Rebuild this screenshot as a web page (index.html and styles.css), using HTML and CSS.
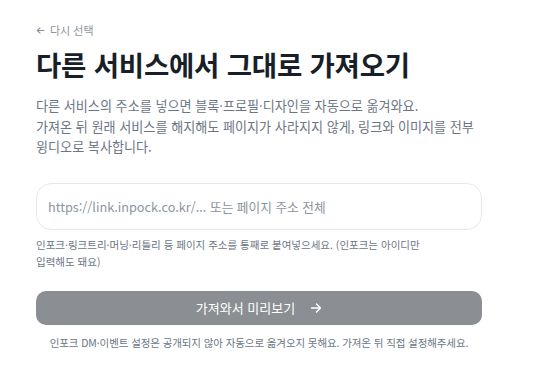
FILE: index.html
```html
<!DOCTYPE html>
<html lang="ko">
<head>
    <meta charset="UTF-8">
    <meta name="viewport" content="width=device-width, initial-scale=1.0">
    <title>다른 서비스에서 가져오기</title>
    <link rel="stylesheet" href="styles.css">
</head>
<body>
    <div class="page">
        <a class="back" href="#">
            <svg class="back-icon" width="9" height="9" viewBox="0 0 10 10" fill="none">
                <path d="M9 5H1.5M4.5 2L1.5 5L4.5 8" stroke="currentColor" stroke-width="1.2" stroke-linecap="round" stroke-linejoin="round"/>
            </svg>
            다시 선택
        </a>

        <h1 class="title">다른 서비스에서 그대로 가져오기</h1>

        <p class="desc">
            다른 서비스의 주소를 넣으면 블록·프로필·디자인을 자동으로 옮겨와요.<br>
            가져온 뒤 원래 서비스를 해지해도 페이지가 사라지지 않게, 링크와 이미지를 전부 윙디오로 복사합니다.
        </p>

        <input class="url-input" type="text" placeholder="https://link.inpock.co.kr/... 또는 페이지 주소 전체">
        <p class="hint">인포크·링크트리·머닝·리틀리 등 페이지 주소를 통째로 붙여넣으세요. (인포크는 아이디만 입력해도 돼요)</p>

        <button class="submit" disabled>
            가져와서 미리보기
            <svg class="submit-icon" width="12" height="12" viewBox="0 0 12 12" fill="none">
                <path d="M1.5 6H10.5M6.5 2L10.5 6L6.5 10" stroke="currentColor" stroke-width="1.4" stroke-linecap="round" stroke-linejoin="round"/>
            </svg>
        </button>

        <p class="note">인포크 DM·이벤트 설정은 공개되지 않아 자동으로 옮겨오지 못해요. 가져온 뒤 직접 설정해주세요.</p>
    </div>
</body>
</html>
```

FILE: styles.css
```css
body {
    margin: 0;
    background-color: #ffffff;
    font-family: "Noto Sans CJK KR", "Noto Sans", sans-serif;
    color: #191f28;
}

.page {
    width: 446px;
    padding: 22px 36px 20px;
    display: flex;
    flex-direction: column;
}

.back {
    display: flex;
    align-items: center;
    gap: 5px;
    font-size: 11px;
    line-height: 16px;
    color: #8b95a1;
    text-decoration: none;
}

.title {
    margin: 8px 0 0;
    font-size: 27.5px;
    line-height: 36px;
    font-weight: 700;
    letter-spacing: -0.2px;
    color: #191f28;
}

.desc {
    margin: 14px 0 0;
    font-size: 13.1px;
    line-height: 20.5px;
    color: #6b7684;
    word-break: keep-all;
}

.url-input {
    box-sizing: border-box;
    margin-top: 25px;
    width: 100%;
    height: 47px;
    padding: 0 11px;
    border: 1px solid #e5e8eb;
    border-radius: 15px;
    font-family: inherit;
    font-size: 12.7px;
    color: #191f28;
    outline: none;
}

.url-input::placeholder {
    color: #8b95a1;
}

.hint {
    margin: 6px 0 0;
    padding-right: 50px;
    font-size: 10.5px;
    line-height: 17px;
    color: #6b7684;
    word-break: keep-all;
}

.submit {
    margin-top: 21px;
    height: 34px;
    border: none;
    border-radius: 10px;
    background-color: #8b8f94;
    color: #ffffff;
    font-family: inherit;
    font-size: 13px;
    display: flex;
    align-items: center;
    justify-content: center;
    gap: 15px;
    padding: 0;
}

.note {
    margin: 10px 0 0;
    text-align: center;
    font-size: 10.5px;
    line-height: 16px;
    color: #6b7684;
    letter-spacing: -0.1px;
}
```
